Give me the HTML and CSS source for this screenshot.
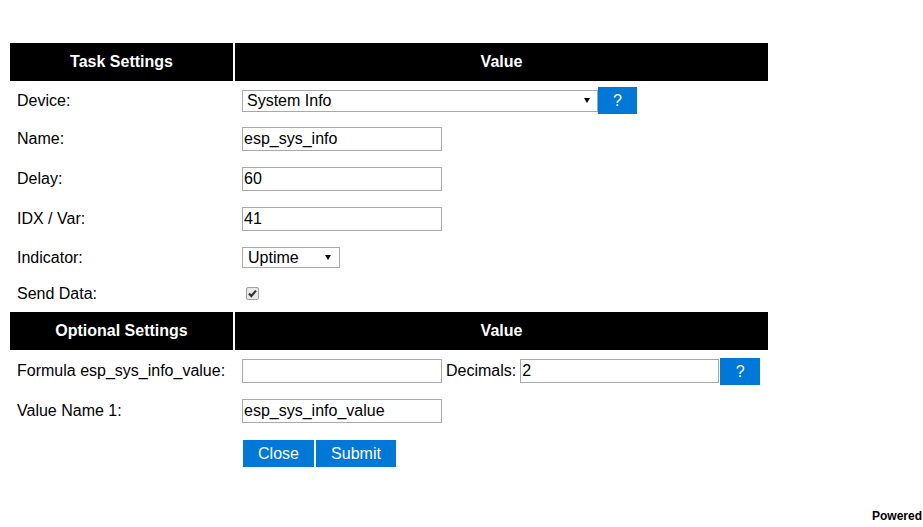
FILE: index.html
```html
<!DOCTYPE html>
<html>
<head>
<meta charset="utf-8">
<title>Task Settings</title>
<link rel="stylesheet" href="styles.css">
</head>
<body>
<table class="settings">
  <colgroup><col class="c1"><col class="c2"></colgroup>
  <tr><th>Task Settings</th><th>Value</th></tr>
  <tr class="h35">
    <td>Device:</td>
    <td><div class="val"><span class="sel sel-device"><span>System Info</span><span class="arrow"></span></span><span class="btn help">?</span></div></td>
  </tr>
  <tr class="h38">
    <td>Name:</td>
    <td><div class="val"><span class="inp">esp_sys_info</span></div></td>
  </tr>
  <tr class="h38">
    <td>Delay:</td>
    <td><div class="val"><span class="inp">60</span></div></td>
  </tr>
  <tr class="h38">
    <td>IDX / Var:</td>
    <td><div class="val"><span class="inp">41</span></div></td>
  </tr>
  <tr class="h35">
    <td>Indicator:</td>
    <td><div class="val"><span class="sel sel-ind"><span>Uptime</span><span class="arrow"></span></span></div></td>
  </tr>
  <tr class="h33">
    <td>Send Data:</td>
    <td><div class="val"><span class="chk"><svg width="11" height="11" viewBox="0 0 11 11"><path d="M2 5.6 L4.3 8 L9 2.6" fill="none" stroke="#333" stroke-width="2.2"/></svg></span></div></td>
  </tr>
  <tr><th>Optional Settings</th><th>Value</th></tr>
  <tr class="h38">
    <td>Formula esp_sys_info_value:</td>
    <td><div class="val"><span class="inp"></span><span class="dec">Decimals:</span><span class="inp">2</span><span class="btn help help2">?</span></div></td>
  </tr>
  <tr class="h38">
    <td>Value Name 1:</td>
    <td><div class="val"><span class="inp">esp_sys_info_value</span></div></td>
  </tr>
  <tr class="h43">
    <td></td>
    <td><div class="val"><span class="btn close">Close</span><span class="btn submit">Submit</span></div></td>
  </tr>
</table>
<div class="footer"><span class="powered">Powered</span></div>
</body>
</html>
```

FILE: styles.css
```css
html {
  background: #fff;
}
body {
  margin: 8px 0 0 8px;
  font-family: "Liberation Sans", Arial, sans-serif;
  font-size: 16px;
  color: #000;
}
.settings {
  margin-top: 33px;
  width: 762px;
  table-layout: fixed;
  border-collapse: separate;
  border-spacing: 2px;
}
.c1 { width: 223px; }
.c2 { width: 533px; }
.settings th {
  background: #000;
  color: #fff;
  font-weight: bold;
  font-size: 16px;
  line-height: 18px;
  padding: 10px;
  text-align: center;
}
.settings td {
  padding: 0 7px;
  vertical-align: middle;
  white-space: nowrap;
  line-height: 18px;
}
.h33 td { height: 33px; }
.h35 td { height: 35px; }
.h38 td { height: 38px; }
.h43 td { height: 43px; }
.val {
  display: flex;
  align-items: center;
}
.inp {
  box-sizing: border-box;
  width: 200px;
  height: 24px;
  border: 1px solid #a9a9a9;
  padding: 0 1px;
  line-height: 22px;
  background: #fff;
  overflow: hidden;
}
.val .inp + .dec + .inp {
  width: 199px;
}
.sel {
  box-sizing: border-box;
  height: 22px;
  border: 1px solid #a9a9a9;
  padding: 0 7px 0 4px;
  line-height: 20px;
  display: flex;
  align-items: center;
  justify-content: space-between;
  background: #fff;
}
.sel-device { width: 356px; }
.sel-ind { width: 98px; padding-left: 5px; padding-right: 8px; height: 21px; line-height: 19px; }
.arrow {
  width: 0;
  height: 0;
  border-left: 3px solid transparent;
  border-right: 3px solid transparent;
  border-top: 5px solid #000;
}
.btn {
  box-sizing: border-box;
  display: inline-block;
  height: 27px;
  line-height: 27px;
  background: #0078d7;
  color: #fff;
  text-align: center;
}
.help {
  width: 39px;
}
.help2 { margin-left: 1px; width: 40px; }
.dec {
  margin-left: 4px;
  margin-right: 4px;
}
.chk {
  box-sizing: border-box;
  width: 13px;
  height: 13px;
  margin-left: 4px;
  border: 1px solid #a0a0a0;
  border-radius: 2px;
  background: #e9e9e9;
  display: flex;
  align-items: center;
  justify-content: center;
}
.chk svg { display: block; }
.close {
  width: 71px;
  margin-left: 1px;
}
.submit {
  width: 80px;
  margin-left: 2px;
}
.footer {
  margin-top: 32px;
  display: flex;
  justify-content: flex-end;
  padding-right: 1px;
  font-weight: bold;
  font-size: 12px;
  line-height: 14px;
  white-space: nowrap;
}
```
